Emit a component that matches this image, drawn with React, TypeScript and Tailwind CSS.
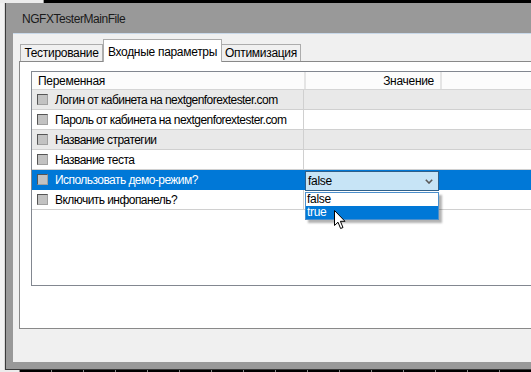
import React from 'react';

interface ParamRow {
    label: string;
    gray?: boolean;
    selected?: boolean;
}

const rows: ParamRow[] = [
    { label: 'Логин от кабинета на nextgenforextester.com', gray: true },
    { label: 'Пароль от кабинета на nextgenforextester.com' },
    { label: 'Название стратегии', gray: true },
    { label: 'Название теста' },
    { label: 'Использовать демо-режим?', selected: true },
    { label: 'Включить инфопанель?' },
];

const font = { fontFamily: '"Liberation Sans", Arial, sans-serif' };

const Checkbox = () => (
    <div className="w-[11px] h-[11px] shrink-0 bg-[#c2c2c2] border-t border-l border-[#555555] border-r border-b border-r-[#a0a0a0] border-b-[#a0a0a0]" />
);

const Cursor = () => (
    <svg width="13" height="20" viewBox="0 0 13 20" className="absolute left-[28px] top-[17px] z-30">
        <path d="M0.5 0.5 L0.5 15.5 L4 12.2 L6.6 18.5 L9 17.5 L6.4 11.3 L11 11.3 Z" fill="#fff" stroke="#000" strokeWidth="1" />
    </svg>
);

const ComboEditor = () => (
    <div className="absolute left-px top-px z-20 w-[134px] h-[20px]">
        <div className="flex items-center h-full bg-[#c7e4f6] border border-[#2f5f89] pl-[2px] pr-[5px]">
            <span className="flex-1 text-[12px] tracking-[-0.3px] text-black">false</span>
            <svg width="8" height="5" viewBox="0 0 8 5">
                <path d="M0.8 0.8 L4 4 L7.2 0.8" fill="none" stroke="#5a5a5a" strokeWidth="1.6" />
            </svg>
        </div>
        <div className="relative mt-px w-[134px] bg-white border border-[#4c8fcc] shadow-[3px_3px_2px_rgba(0,0,0,0.3)]">
            <div className="h-[13px] leading-[13px] text-[12px] tracking-[-0.3px] text-black pl-[1px]">false</div>
            <div className="h-[13px] leading-[13px] text-[12px] tracking-[-0.3px] text-white bg-[#0078d7] pl-[1px]">true</div>
            <Cursor />
        </div>
    </div>
);

export default function App() {
    return (
        <div className="w-[531px] h-[372px] overflow-hidden bg-black flex flex-col" style={font}>
            {/* top screen strip */}
            <div className="h-[3px] flex shrink-0">
                <div className="w-[44px] bg-[#ececec] border-r border-[#9a9a9a]" />
                <div className="flex-1 bg-black" />
            </div>

            <div className="flex flex-1 min-h-0">
                <div className="w-[5px] bg-[#f2f2f2] border-r border-[#d8d8d8]" />

                {/* window */}
                <div className="flex-1 flex flex-col bg-[#999999] border-l border-b border-[#3a3a3a]">
                    <div className="h-[30px] shrink-0 flex items-center pl-[16px] pt-[1px] text-[12px] tracking-[-0.45px] text-[#1a1a1a]">
                        NGFXTesterMainFile
                    </div>

                    <div className="flex-1 min-h-0 ml-[7px] mb-[7px] bg-[#f0f0f0] border-t border-[#c9d9ea] pl-[6px] pt-[5px] flex flex-col">
                        {/* tabs */}
                        <div className="flex items-end h-[22px] shrink-0 text-[12px] tracking-[-0.3px] text-black">
                            <div className="ml-px w-[83px] h-[17px] flex items-center justify-center bg-[#f0f0f0] border border-b-0 border-[#acacac]">
                                Тестирование
                            </div>
                            <div className="relative z-10 -mb-px w-[119px] h-[23px] flex items-start justify-center pt-[3px] bg-white border border-b-0 border-[#acacac]">
                                Входные параметры
                            </div>
                            <div className="w-[79px] h-[17px] flex items-center justify-center bg-[#f0f0f0] border border-b-0 border-l-0 border-[#acacac]">
                                Оптимизация
                            </div>
                        </div>

                        {/* tab panel */}
                        <div className="h-[268px] shrink-0 bg-white border border-r-0 border-[#898989] pl-[11px] pt-[9px]">
                            <div className="h-[215px] bg-white border border-r-0 border-[#828790] text-[12px] tracking-[-0.3px] text-black">
                                {/* header */}
                                <div className="flex h-[18px] bg-[#fcfcfc] border-b border-[#d5d5d5]">
                                    <div className="w-[272px] pl-[6px] flex items-center">Переменная</div>
                                    <div className="w-[2px] bg-[#e5e5e5]" />
                                    <div className="w-[134px] pr-[6px] flex items-center justify-end">Значение</div>
                                    <div className="w-[2px] bg-[#e5e5e5]" />
                                    <div className="flex-1" />
                                </div>

                                {rows.map((row) => (
                                    <div
                                        key={row.label}
                                        className={`flex h-[20px] border-b ${
                                            row.selected
                                                ? 'bg-[#0078d7] border-[#0078d7] text-white'
                                                : row.gray
                                                  ? 'bg-[#e9e9e9] border-[#d0d0d0]'
                                                  : 'bg-white border-[#d0d0d0]'
                                        }`}
                                    >
                                        <div className={`w-[272px] flex items-center pl-[5px] border-r ${row.selected ? 'border-[#0078d7]' : 'border-[#d0d0d0]'}`}>
                                            <Checkbox />
                                            <span className="ml-[7px] whitespace-nowrap tracking-[-0.55px]">{row.label}</span>
                                        </div>
                                        <div className="relative flex-1">{row.selected && <ComboEditor />}</div>
                                    </div>
                                ))}
                            </div>
                        </div>
                    </div>
                </div>
            </div>

            {/* bottom screen strip */}
            <div className="h-[2px] shrink-0 flex">
                <div className="w-[44px] bg-[#ececec]" />
                <div className="flex-1 flex">
                    {Array.from({ length: 16 }).map((_, i) => (
                        <div key={i} className="w-[32px] shrink-0 border-l border-[#8a8a8a] bg-black" />
                    ))}
                </div>
            </div>
        </div>
    );
}
